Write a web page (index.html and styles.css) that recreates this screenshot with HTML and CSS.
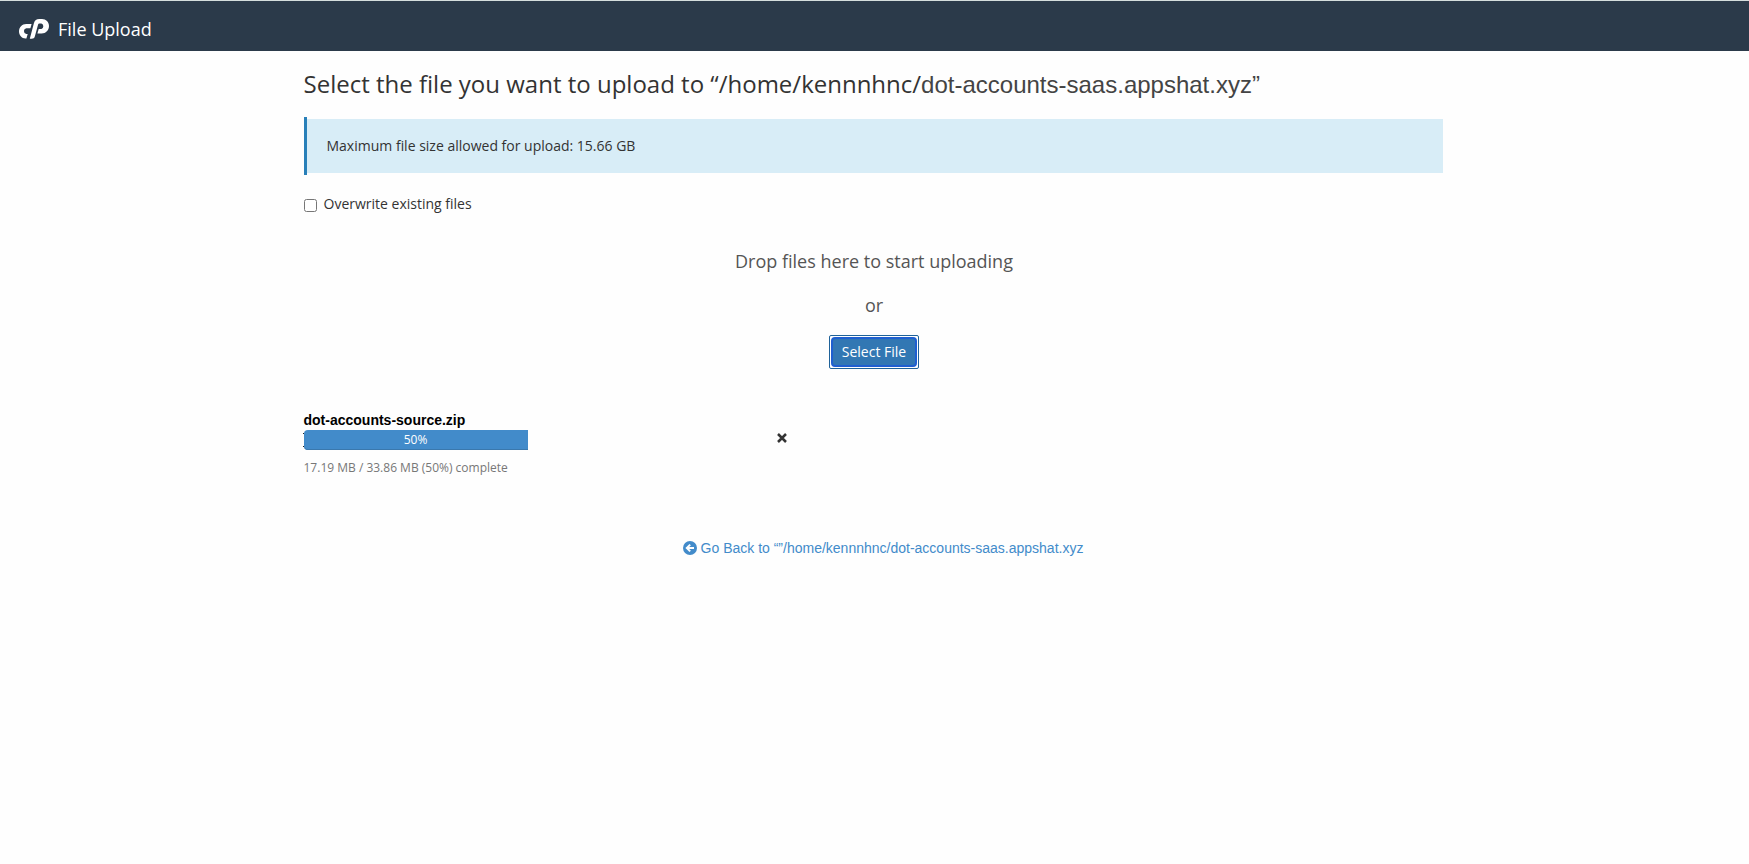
FILE: index.html
```html
<!DOCTYPE html>
<html lang="en">
<head>
<meta charset="utf-8">
<title>File Upload</title>
<link rel="stylesheet" href="styles.css">
</head>
<body>
<header class="topbar">
  <svg class="logo" viewBox="0 0 30 20" aria-hidden="true">
    <path d="M12.6 5 11.4 9.2H7.3a2.9 2.9 0 0 0 0 5.7h1.4L7.4 19.4H6.6C2.6 19.4 0 16 0 12.4 0 8.300 3 5 7.200 5z"/>
    <path d="M10.800 19.800 14.900 4.200C15.700 1.400 17.500 0 20.200 0H23c4 0 7 3 7 6.900 0 4.200-3.200 7.500-7.400 7.500h-4.200l1.300-4.400h2.700a3 3 0 0 0 0-5.600h-2c-.7 0-1.100.3-1.300 1L15.900 17.300c-.5 1.800-1.500 2.500-3.200 2.500z"/>
  </svg>
  <span class="app-name">File Upload</span>
</header>
<main class="container">
  <h1 class="title">Select the file you want to upload to “/home/kennnhnc/<span class="folder">dot-accounts-saas.appshat.xyz”</span></h1>
  <div class="callout"><p class="callout-text">Maximum file size allowed for upload: 15.66 GB</p></div>
  <label class="overwrite" for="overwrite"><input class="check" type="checkbox" id="overwrite">Overwrite existing files</label>
  <section class="dropzone">
    <p class="drop-text">Drop files here to start uploading</p>
    <p class="drop-text">or</p>
    <button class="select-file" type="button"><span class="select-face">Select File</span></button>
  </section>
  <section class="upload">
    <div class="upload-info">
      <div class="file-name">dot-accounts-source.zip</div>
      <div class="track"><div class="bar" style="width: 50%">50%</div></div>
      <div class="status">17.19 MB / 33.86 MB (50%) complete</div>
    </div>
    <button class="cancel" type="button" aria-label="Cancel upload">
      <svg class="cancel-icon" viewBox="0 0 10 10"><path d="M1 1 9 9M9 1 1 9"/></svg>
    </button>
  </section>
  <nav class="back">
    <a class="back-link" href="#"><svg class="back-icon" viewBox="0 0 14 14" aria-hidden="true"><circle cx="7" cy="7" r="7"/><path d="M11 7H4M7.200 3.600 3.800 7l3.400 3.400"/></svg>Go Back to “”/home/kennnhnc/dot-accounts-saas.appshat.xyz</a>
  </nav>
</main>
</body>
</html>
```
FILE: styles.css
```css
* { box-sizing: border-box; }
body {
  margin: 0;
  background: #fefefe;
  color: #333;
  font-family: "Open Sans", sans-serif;
  font-size: 14px;
  line-height: 20px;
}
h1, p { margin: 0; }
.topbar {
  display: flex;
  align-items: center;
  gap: 9px;
  height: 51px;
  padding: 6px 19px 0;
  border-top: 1px solid #d5dedd;
  background: #2b3a4a;
  color: #fff;
}
.logo { width: 30px; height: 20px; fill: #fff; }
.app-name { font-size: 18px; line-height: 24px; }
.container {
  width: 100%;
  max-width: 1170px;
  margin: 0 auto;
  padding: 16px 17px 16px 14px;
}
.title {
  margin-bottom: 15px;
  font-size: 24px;
  font-weight: 400;
  line-height: 34px;
}
.folder {
  color: #444;
  font-family: "Liberation Sans", Arial, sans-serif;
}
.callout {
  padding: 2px 0;
  border-left: 3px solid #2980b9;
}
.callout-text {
  padding: 17px 20px;
  background: #d8edf7;
}
.overwrite {
  display: flex;
  align-items: center;
  gap: 7px;
  width: max-content;
  margin-top: 19px;
}
.check { width: 13px; height: 13px; margin: 3px 0 0; }
.dropzone {
  display: flex;
  flex-direction: column;
  align-items: center;
  padding: 35px 0 0 2px;
}
.drop-text { margin-bottom: 20px; color: #555; font-size: 18px; line-height: 24px; }
.select-file {
  margin-top: -2px;
  padding: 1px;
  border: 1px solid #1f6299;
  border-radius: 2px;
  background: #fff;
  font: 500 14px/18px "Open Sans", sans-serif;
}
.select-face {
  display: block;
  padding: 4px 9px;
  border: 2px solid #1f5fd0;
  border-radius: 4px;
  background: #3277b3;
  color: #fff;
}
.upload {
  display: flex;
  align-items: flex-start;
  gap: 25px;
  margin-top: 41px;
}
.upload-info { width: 448px; }
.file-name {
  color: #000;
  font: bold 14px/20px "Liberation Sans", Arial, sans-serif;
}
.track { position: relative; }
/* end ticks at the left edge of the track */
.track::before {
  content: "";
  position: absolute;
  top: 3px;
  bottom: 3px;
  left: -1px;
  width: 1px;
  border: solid #222;
  border-width: 1px 0;
}
.bar {
  border-radius: 4px 0 0 4px;
  background: #428bca;
  box-shadow: inset 0 -1px 0 #3a78ad;
  color: #fff;
  font-size: 12px;
  text-align: center;
}
.status { margin-top: 8px; color: #777; font-size: 12px; }
.cancel {
  display: flex;
  margin-top: 23px;
  padding: 0;
  border: 0;
  background: none;
}
.cancel-icon { width: 10px; height: 10px; fill: none; stroke: #333; stroke-width: 2.5; }
.back { display: flex; justify-content: center; margin-top: 60px; padding-left: 20px; }
.back-link {
  display: flex;
  align-items: center;
  gap: 4px;
  color: #428bca;
  font-family: "Liberation Sans", Arial, sans-serif;
  text-decoration: none;
}
.back-icon { width: 14px; height: 14px; fill: #428bca; }
.back-icon path { fill: none; stroke: #fefefe; stroke-width: 2; }
```
